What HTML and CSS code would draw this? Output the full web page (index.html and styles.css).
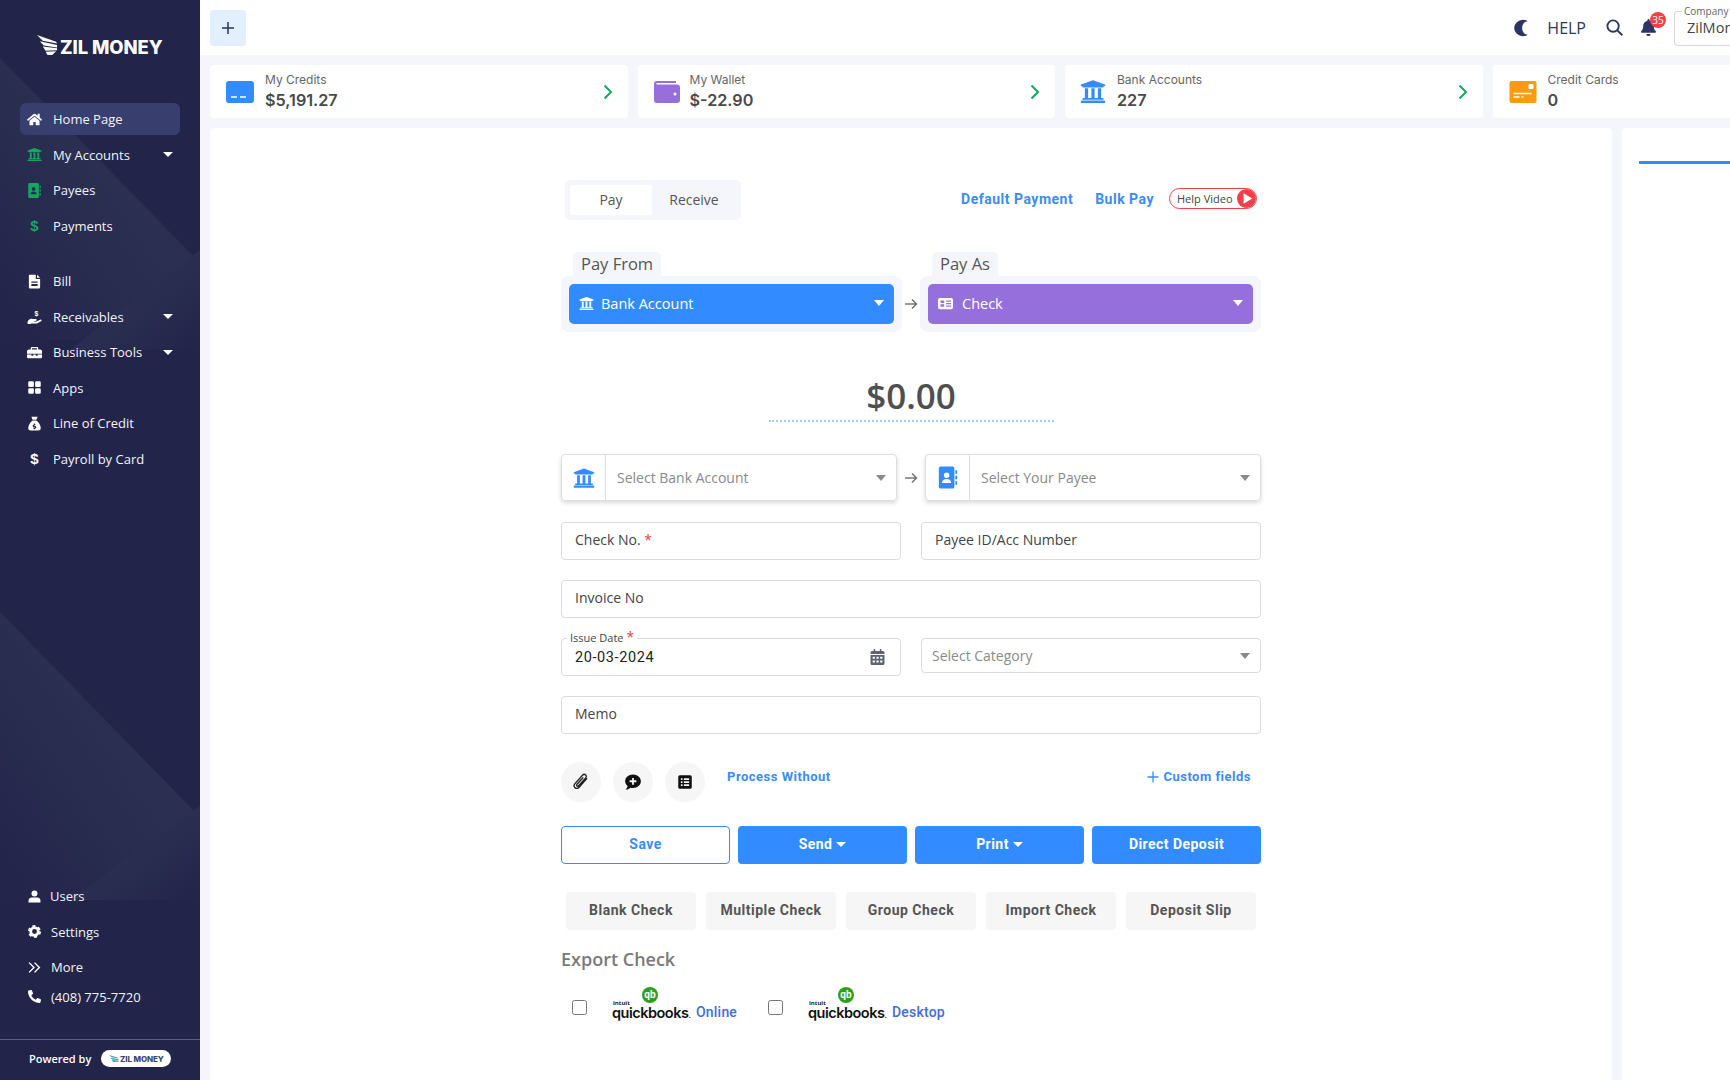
FILE: index.html
```html
<!DOCTYPE html>
<html>

<head>
    <title>Zil Money</title>
    <link rel="stylesheet" href="styles.css">
</head>

<body>
    <svg class="sprite" width="0" height="0">
        <symbol id="i-bank" viewBox="0 0 512 512"><path d="M496 128v16a8 8 0 0 1-8 8h-24v12c0 6.627-5.373 12-12 12H60c-6.627 0-12-5.373-12-12v-12H24a8 8 0 0 1-8-8v-16a8 8 0 0 1 4.941-7.392l232-88a7.996 7.996 0 0 1 6.118 0l232 88A8 8 0 0 1 496 128zm-24 304H40c-13.255 0-24 10.745-24 24v16a8 8 0 0 0 8 8h464a8 8 0 0 0 8-8v-16c0-13.255-10.745-24-24-24zM96 192v192H60c-6.627 0-12 5.373-12 12v20h416v-20c0-6.627-5.373-12-12-12h-36V192h-64v192h-64V192h-64v192h-64V192H96z"/></symbol>
        <symbol id="i-book" viewBox="0 0 24 24"><path d="M4 0h13a2 2 0 0 1 2 2v20a2 2 0 0 1-2 2H4a2 2 0 0 1-2-2V2a2 2 0 0 1 2-2zm6.5 6.5a3 3 0 1 0 0 6 3 3 0 0 0 0-6zM5.500 18h10c0-3-2-4.500-5-4.500s-5 1.500-5 4.500z" fill-rule="evenodd"/><path d="M20 4h2v4h-2zM20 10h2v4h-2zM20 16h2v4h-2z"/></symbol>
        <symbol id="i-caret-arrow" viewBox="0 0 14 12"><path d="M1 6h11M8 1.500 12.500 6 8 10.500" fill="none" stroke="currentColor" stroke-width="1.600"/></symbol>
    </svg>

    <aside class="sidebar">
        <svg class="sidebar-bg" viewBox="0 0 200 1080" preserveAspectRatio="none">
            <defs>
                <linearGradient id="fade-a" x1="1" y1="0" x2="0" y2="1">
                    <stop offset=".45" stop-color="#2b2f52"/>
                    <stop offset="1" stop-color="#222549"/>
                </linearGradient>
                <linearGradient id="fade-b" x1="0" y1="0" x2="1" y2="1">
                    <stop offset=".45" stop-color="#2b2f52"/>
                    <stop offset="1" stop-color="#222549"/>
                </linearGradient>
            </defs>
            <path fill="url(#fade-a)" d="M0 58 195 258 130 340H0z"/>
            <path fill="url(#fade-b)" d="M200 250 70 350H200z"/>
            <path fill="url(#fade-a)" d="M0 612 195 812 130 900H0z"/>
            <path fill="url(#fade-b)" d="M200 806 70 900H200z"/>
        </svg>

        <div class="logo">
            <svg class="logo-wing" viewBox="0 0 22 22"><path fill="#fff" d="M0 0 20 7 21 9 6 6zM3 6.500 21 10.500V13L7 11zM6 12l15 2v2L9 16.500zM9 17.500 20 17 16 21 11 21z"/></svg>
            <span>ZIL MONEY</span>
        </div>

        <nav class="nav">
            <a class="nav-item active">
                <svg class="nav-ic" viewBox="0 0 576 512"><path fill="#fff" d="M280.37 148.26L96 300.11V464a16 16 0 0 0 16 16l112.06-.29a16 16 0 0 0 15.92-16V368a16 16 0 0 1 16-16h64a16 16 0 0 1 16 16v95.64a16 16 0 0 0 16 16.05L464 480a16 16 0 0 0 16-16V300L295.67 148.26a12.19 12.19 0 0 0-15.3 0zM571.6 251.47L488 182.56V44.05a12 12 0 0 0-12-12h-56a12 12 0 0 0-12 12v72.61L318.47 43a48 48 0 0 0-61 0L4.34 251.47a12 12 0 0 0-1.6 16.9l25.5 31A12 12 0 0 0 45.15 301l235.22-193.74a12.19 12.19 0 0 1 15.3 0L530.9 301a12 12 0 0 0 16.9-1.6l25.5-31a12 12 0 0 0-1.7-16.93z"/></svg>
                Home Page
            </a>
            <a class="nav-item"><svg class="nav-ic green"><use href="#i-bank"/></svg>My Accounts<i class="caret"></i></a>
            <a class="nav-item"><svg class="nav-ic green"><use href="#i-book"/></svg>Payees</a>
            <a class="nav-item"><span class="nav-ic dollar green-text">$</span>Payments</a>

            <a class="nav-item gap-top">
                <svg class="nav-ic" viewBox="0 0 24 24"><path fill="#fff" fill-rule="evenodd" d="M4 1h10v7h7v13a2 2 0 0 1-2 2H5a2 2 0 0 1-2-2V2a1 1 0 0 1 1-1zm3 11v2h10v-2zm0 4v3h10v-3zM16 1l5 5h-5z"/></svg>
                Bill
            </a>
            <a class="nav-item">
                <svg class="nav-ic" viewBox="0 0 24 24"><path fill="#fff" d="M1 20c2-4 5-5 8-4h5c2 0 2 3 0 3h-3v1h4l6-3c2-1 3 1 2 2l-7 4H7l-2 1H1z"/><text x="12" y="11" class="hand-dollar">$</text></svg>
                Receivables<i class="caret"></i>
            </a>
            <a class="nav-item">
                <svg class="nav-ic" viewBox="0 0 24 24"><path fill="#fff" fill-rule="evenodd" d="M8 3h8a2 2 0 0 1 2 2v2h3a3 3 0 0 1 3 3v4H0v-4a3 3 0 0 1 3-3h3V5a2 2 0 0 1 2-2zm0 2v2h8V5zM0 15h7v2h3v-2h4v2h3v-2h7v4a2 2 0 0 1-2 2H2a2 2 0 0 1-2-2z"/></svg>
                Business Tools<i class="caret"></i>
            </a>
            <a class="nav-item">
                <svg class="nav-ic" viewBox="0 0 24 24"><path fill="#fff" d="M4 2h5a2 2 0 0 1 2 2v5a2 2 0 0 1-2 2H4a2 2 0 0 1-2-2V4a2 2 0 0 1 2-2zM15 2h5a2 2 0 0 1 2 2v5a2 2 0 0 1-2 2h-5a2 2 0 0 1-2-2V4a2 2 0 0 1 2-2zM4 13h5a2 2 0 0 1 2 2v5a2 2 0 0 1-2 2H4a2 2 0 0 1-2-2v-5a2 2 0 0 1 2-2zM15 13h5a2 2 0 0 1 2 2v5a2 2 0 0 1-2 2h-5a2 2 0 0 1-2-2v-5a2 2 0 0 1 2-2z"/></svg>
                Apps
            </a>
            <a class="nav-item">
                <svg class="nav-ic" viewBox="0 0 24 24"><path fill="#fff" fill-rule="evenodd" d="M7 1h10l-2 5H9zM9 7h6c4 3 7 8 7 12 0 3-2 4-4 4H6c-2 0-4-1-4-4 0-4 3-9 7-12zm2 5v1.500c-3 1-2 4 .5 4.500 2 .3 1.500 1.500-1.500.8v1.400h1v1h2v-1.200c3-1 2-4-.5-4.500-1.800-.3-1.500-1.400 1-.8v-1.300l-1-.3V12z"/></svg>
                Line of Credit
            </a>
            <a class="nav-item"><span class="nav-ic dollar">$</span>Payroll by Card</a>
        </nav>

        <div class="side-bottom">
            <a class="bottom-item users">
                <svg class="bottom-ic" viewBox="0 0 24 24"><circle cx="12" cy="6.500" r="5.500" fill="#fff"/><path fill="#fff" d="M1 23v-3c0-4 3-6 6-6h10c3 0 6 2 6 6v3z"/></svg>
                Users
            </a>
            <a class="bottom-item">
                <svg class="bottom-ic" viewBox="0 0 24 24"><circle cx="12" cy="12" r="7" fill="none" stroke="#fff" stroke-width="5"/><circle cx="12" cy="12" r="10" fill="none" stroke="#fff" stroke-width="4" stroke-dasharray="5.500 5"/></svg>
                Settings
            </a>
            <a class="bottom-item">
                <svg class="bottom-ic" viewBox="0 0 24 24"><path fill="none" stroke="#fff" stroke-width="2.600" d="M2 3l9 9-9 9M12 3l9 9-9 9"/></svg>
                More
            </a>
            <a class="bottom-item phone">
                <svg class="bottom-ic" viewBox="0 0 512 512"><path fill="#fff" transform="matrix(-1 0 0 1 512 0)" d="M493.4 24.6l-104-24c-11.3-2.6-22.9 3.3-27.5 13.9l-48 112c-4.2 9.8-1.4 21.3 6.9 28l60.6 49.6c-36 76.7-98.9 140.5-177.2 177.2l-49.6-60.6c-6.8-8.3-18.2-11.1-28-6.9l-112 48C3.9 366.5-2 378.1.6 389.4l24 104C27.1 504.2 36.7 512 48 512c256.1 0 464-207.5 464-464 0-11.2-7.7-20.9-18.6-23.4z"/></svg>
                (408) 775-7720
            </a>
        </div>

        <div class="powered">
            <span>Powered by</span>
            <span class="powered-pill">
                <svg class="pill-wing" viewBox="0 0 22 22"><path fill="#2aa3b8" d="M0 2 20 8 21 10 6 7zM3 8 21 11.500V14L7 12zM6 13l15 2v2L9 17.500z"/></svg>
                ZIL MONEY
            </span>
        </div>
    </aside>

    <div class="content">
        <header class="topbar">
            <button class="add-btn">
                <svg viewBox="0 0 14 14"><path d="M7 1v12M1 7h12" stroke="#2c3260" stroke-width="1.500"/></svg>
            </button>
            <div class="top-actions">
                <svg class="top-moon" viewBox="0 0 24 24"><path fill="#2e3566" d="M15 1C8.500 1 3 6 3 12s5.500 11 12 11c2.500 0 4.500-.8 6-2-4.500-.2-7.500-4-7.500-9S16.500 3.200 21 3c-1.500-1.200-3.500-2-6-2z"/></svg>
                <span class="top-help">HELP</span>
                <svg class="top-search" viewBox="0 0 24 24"><circle cx="10" cy="10" r="8" fill="none" stroke="#2e3566" stroke-width="2.600"/><path d="M16 16l7 7" stroke="#2e3566" stroke-width="2.800"/></svg>
                <span class="top-bell">
                    <svg viewBox="0 0 448 512"><path fill="#2e3566" d="M224 512c35.32 0 63.97-28.65 63.97-64H160.03c0 35.35 28.65 64 63.97 64zm215.39-149.71c-19.32-20.76-55.47-51.99-55.47-154.29 0-77.7-54.48-139.9-127.94-155.16V32c0-17.67-14.32-32-31.98-32s-31.98 14.33-31.98 32v20.84C118.56 68.1 64.08 130.3 64.08 208c0 102.3-36.15 133.53-55.47 154.29-6 6.45-8.66 14.16-8.61 21.71.11 16.4 12.98 32 32.1 32h383.8c19.12 0 32-15.6 32.1-32 .05-7.55-2.61-15.26-8.61-21.71z"/></svg>
                    <b class="badge">35</b>
                </span>
                <div class="company">
                    <span class="company-label">Company</span>
                    <span class="company-name">ZilMoney</span>
                </div>
            </div>
        </header>

        <section class="stats">
            <div class="stat">
                <svg class="stat-ic" viewBox="0 0 28 22"><rect width="28" height="22" rx="3" fill="#328cff"/><path d="M5 16h6M14 16h6" stroke="#fff" stroke-width="1.500"/></svg>
                <div class="stat-text"><span class="stat-label">My Credits</span><strong class="stat-value">$5,191.27</strong></div>
                <svg class="chev" viewBox="0 0 10 16"><path d="M1.500 1.500 8 8l-6.500 6.500" fill="none" stroke="#12a860" stroke-width="2"/></svg>
            </div>
            <div class="stat">
                <svg class="stat-ic wallet-ic" viewBox="0 0 26 22"><path fill="#9570dd" d="M3 0h19v2H3C2 2 2 3.500 3 3.500h20a3 3 0 0 1 3 3V19a3 3 0 0 1-3 3H3a3 3 0 0 1-3-3V3a3 3 0 0 1 3-3z"/><circle cx="21" cy="13" r="1.500" fill="#fff"/></svg>
                <div class="stat-text"><span class="stat-label">My Wallet</span><strong class="stat-value">$-22.90</strong></div>
                <svg class="chev" viewBox="0 0 10 16"><path d="M1.500 1.500 8 8l-6.500 6.500" fill="none" stroke="#12a860" stroke-width="2"/></svg>
            </div>
            <div class="stat">
                <svg class="stat-ic bank-ic"><use href="#i-bank"/></svg>
                <div class="stat-text"><span class="stat-label">Bank Accounts</span><strong class="stat-value">227</strong></div>
                <svg class="chev" viewBox="0 0 10 16"><path d="M1.500 1.500 8 8l-6.500 6.500" fill="none" stroke="#12a860" stroke-width="2"/></svg>
            </div>
            <div class="stat">
                <svg class="stat-ic" viewBox="0 0 27 22"><rect width="27" height="22" rx="2" fill="#fb9b0f"/><rect x="19" y="3" width="5" height="5" rx="1" fill="#fff"/><path d="M4 12.500h18M4 16h6M12 16h2" stroke="#fff" stroke-width="1.300"/></svg>
                <div class="stat-text"><span class="stat-label">Credit Cards</span><strong class="stat-value">0</strong></div>
            </div>
        </section>

        <main class="panels">
            <section class="form-panel">
                <div class="form-wrap">
                    <div class="form-top">
                        <div class="toggle">
                            <span class="toggle-tab on">Pay</span>
                            <span class="toggle-tab">Receive</span>
                        </div>
                        <div class="top-links">
                            <a class="link-strong">Default Payment</a>
                            <a class="link-strong">Bulk Pay</a>
                            <span class="help-pill">Help Video
                                <svg viewBox="0 0 20 20"><circle cx="10" cy="10" r="10" fill="#f0414a"/><path fill="#fff" d="M7 4.500v11l9-5.500z"/></svg>
                            </span>
                        </div>
                    </div>

                    <div class="pay-row">
                        <div class="pay-col">
                            <span class="pay-tag">Pay From</span>
                            <div class="pay-box">
                                <div class="pay-btn blue">
                                    <svg class="pay-ic"><use href="#i-bank"/></svg>
                                    Bank Account<i class="caret"></i>
                                </div>
                            </div>
                        </div>
                        <svg class="arrow"><use href="#i-caret-arrow"/></svg>
                        <div class="pay-col">
                            <span class="pay-tag">Pay As</span>
                            <div class="pay-box">
                                <div class="pay-btn purple">
                                    <svg class="pay-ic" viewBox="0 0 24 20"><path fill="#fff" fill-rule="evenodd" d="M3 1h18a3 3 0 0 1 3 3v12a3 3 0 0 1-3 3H3a3 3 0 0 1-3-3V4a3 3 0 0 1 3-3zm1 4v4h6V5zm9 0v2h8V5zm0 4v2h8V9zM4 11v4h6v-4zm9 2v2h8v-2z"/></svg>
                                    <span class="check-text">Check</span><i class="caret"></i>
                                </div>
                            </div>
                        </div>
                    </div>

                    <div class="amount">$0.00</div>

                    <div class="select-row">
                        <div class="pick">
                            <span class="pick-ic"><svg class="pick-bank"><use href="#i-bank"/></svg></span>
                            <span class="pick-text">Select Bank Account</span>
                            <i class="caret gray"></i>
                        </div>
                        <svg class="arrow"><use href="#i-caret-arrow"/></svg>
                        <div class="pick">
                            <span class="pick-ic"><svg class="pick-book"><use href="#i-book"/></svg></span>
                            <span class="pick-text">Select Your Payee</span>
                            <i class="caret gray"></i>
                        </div>
                    </div>

                    <div class="fields">
                        <div class="field">Check No.&nbsp;<em class="req">*</em></div>
                        <div class="field">Payee ID/Acc Number</div>
                        <div class="field wide">Invoice No</div>
                        <div class="field date">
                            <span class="float-label">Issue Date <em class="req">*</em></span>
                            <span class="date-val">20-03-2024</span>
                            <svg class="cal" viewBox="0 0 448 512"><path fill="#5e6470" fill-rule="evenodd" d="M100 0h50v60h148V0h50v60h52a48 48 0 0 1 48 48v52H0v-52a48 48 0 0 1 48-48h52zM0 190h448v274a48 48 0 0 1-48 48H48a48 48 0 0 1-48-48zm70 60v60h70v-60zm120 0v60h70v-60zm120 0v60h70v-60zM70 370v60h70v-60zm120 0v60h70v-60zm120 0v60h70v-60z"/></svg>
                        </div>
                        <div class="field category">
                            <span class="pick-text">Select Category</span>
                            <i class="caret gray"></i>
                        </div>
                        <div class="field wide">Memo</div>
                    </div>

                    <div class="tools">
                        <span class="tool">
                            <svg viewBox="0 0 24 24"><path fill="none" stroke="#222" stroke-width="1.800" d="M20 7 9.500 19c-1.500 1.700-4 2-5.500.6s-1.500-3.800 0-5.500L14 3c1.200-1.300 3-1.500 4.200-.4s1 3-.2 4.300L8.800 17c-.7.800-1.700.9-2.300.4s-.6-1.500.1-2.300L15 6"/></svg>
                        </span>
                        <span class="tool">
                            <svg viewBox="0 0 24 24"><path fill="#111" fill-rule="evenodd" d="M12 2c6 0 10.500 4 10.500 9S18 20 12 20c-1.300 0-2.500-.2-3.600-.5C7 21 4.500 22.500 2 22c1.500-1.200 2.500-3 2.800-4.800C2.800 15.700 1.500 13.500 1.500 11 1.500 6 6 2 12 2zm-1.200 4.500v3.300H7.500v2.400h3.300v3.300h2.400v-3.300h3.300V9.800h-3.300V6.500z"/></svg>
                        </span>
                        <span class="tool">
                            <svg viewBox="0 0 24 24"><path fill="#111" fill-rule="evenodd" d="M5 3h14a2 2 0 0 1 2 2v14a2 2 0 0 1-2 2H5a2 2 0 0 1-2-2V5a2 2 0 0 1 2-2zm1.500 4v2.200h2.200V7zm4 0v2.200h7V7zm-4 4v2.200h2.200V11zm4 0v2.200h7V11zm-4 4v2.200h2.200V15zm4 0v2.200h7V15z"/></svg>
                        </span>
                        <a class="link-small process">Process Without</a>
                        <a class="link-small custom"><svg viewBox="0 0 12 12"><path d="M6 .5v11M.5 6h11" stroke="#3a8cf5" stroke-width="1.300"/></svg>Custom fields</a>
                    </div>

                    <div class="main-btns">
                        <button class="btn outline">Save</button>
                        <button class="btn">Send<i class="caret small"></i></button>
                        <button class="btn">Print<i class="caret small"></i></button>
                        <button class="btn">Direct Deposit</button>
                    </div>

                    <div class="sub-btns">
                        <button class="sub-btn">Blank Check</button>
                        <button class="sub-btn">Multiple Check</button>
                        <button class="sub-btn">Group Check</button>
                        <button class="sub-btn">Import Check</button>
                        <button class="sub-btn">Deposit Slip</button>
                    </div>

                    <h3 class="export-title">Export Check</h3>
                    <div class="export-row">
                        <div class="export-item">
                            <input type="checkbox" class="export-check">
                            <span class="qb">
                                <span class="qb-badge">qb</span>
                                <small class="qb-intuit">intuit</small>
                                <span class="qb-word">quickbooks<span class="qb-dot">.</span></span>
                            </span>
                            <a class="export-link">Online</a>
                        </div>
                        <div class="export-item">
                            <input type="checkbox" class="export-check">
                            <span class="qb">
                                <span class="qb-badge">qb</span>
                                <small class="qb-intuit">intuit</small>
                                <span class="qb-word">quickbooks<span class="qb-dot">.</span></span>
                            </span>
                            <a class="export-link">Desktop</a>
                        </div>
                    </div>
                </div>
            </section>

            <section class="side-panel">
                <div class="side-line"></div>
            </section>
        </main>
    </div>
</body>

</html>
```

FILE: styles.css
```css
* {
    box-sizing: border-box;
}

body {
    font-family: "Open Sans", sans-serif;
    margin: 0;
    display: flex;
    width: 1730px;
    height: 1080px;
    overflow: hidden;
    background: #f4f6fb;
    color: #4f4f4f;
}

.sprite {
    position: absolute;
}

i,
em {
    font-style: normal;
}

a {
    text-decoration: none;
}

button {
    border: none;
    font: inherit;
}

/* carets */
.caret {
    width: 0;
    height: 0;
    border-left: 5.500px solid transparent;
    border-right: 5.500px solid transparent;
    border-top: 6px solid #fff;
    margin-left: auto;
}

.caret.gray {
    border-top-color: #8a8a8a;
}

.caret.small {
    border-left-width: 5px;
    border-right-width: 5px;
    border-top-width: 5px;
    margin-left: 4px;
}

/* sidebar */
.sidebar {
    width: 200px;
    flex-shrink: 0;
    height: 100%;
    background: #222549;
    position: relative;
    display: flex;
    flex-direction: column;
    color: #fff;
    overflow: hidden;
}

.sidebar-bg {
    position: absolute;
    left: 0;
    top: 0;
    width: 200px;
    height: 1080px;
}

.logo,
.nav,
.side-bottom,
.powered {
    position: relative;
}

.logo {
    display: flex;
    align-items: flex-end;
    height: 57px;
    padding-left: 37px;
    font-family: Inter, sans-serif;
    font-weight: 800;
    font-size: 18.500px;
    letter-spacing: -.1px;
}

.logo span {
    line-height: 20px;
    margin-left: 2px;
}

.logo-wing {
    width: 21px;
    height: 23px;
    flex-shrink: 0;
}

.nav {
    margin-top: 46px;
    padding: 0 20px;
    flex: 1;
}

.nav-item {
    display: flex;
    align-items: center;
    height: 35.500px;
    padding: 0 7px;
    font-size: 13px;
    color: #f2f3f8;
    white-space: nowrap;
}

.nav-item .caret {
    border-left-width: 5px;
    border-right-width: 5px;
    border-top-width: 5px;
}

.nav-item.active {
    background: #383f6e;
    border-radius: 6px;
    height: 32px;
    margin-bottom: 2px;
}

.nav-item.gap-top {
    margin-top: 20px;
}

.nav-ic {
    width: 15px;
    height: 15px;
    margin-right: 11px;
    flex-shrink: 0;
    fill: #fff;
}

.nav-ic.green {
    fill: #12a860;
}

.dollar {
    font-weight: 700;
    font-size: 15px;
    line-height: 15px;
    text-align: center;
    font-family: "Liberation Sans", sans-serif;
    color: #fff;
}

.green-text {
    color: #12a860;
}

.hand-dollar {
    fill: #fff;
    font-family: "Liberation Sans", sans-serif;
    font-weight: 700;
    font-size: 11px;
}

.side-bottom {
    padding: 0 0 31px 28px;
}

.bottom-item {
    display: flex;
    align-items: center;
    height: 35.500px;
    font-size: 13px;
    color: #f2f3f8;
}

.bottom-item.phone {
    height: 23px;
}

.bottom-ic {
    width: 13px;
    height: 13px;
    margin-right: 10px;
    flex-shrink: 0;
}

.bottom-item.users .bottom-ic {
    margin-right: 9px;
}

.powered {
    height: 41px;
    border-top: 1px solid #5c5f7c;
    display: flex;
    align-items: center;
    padding: 0 0 3px 29px;
    font-size: 11px;
    font-weight: 600;
    color: #fff;
}

.powered-pill {
    display: flex;
    align-items: center;
    justify-content: center;
    width: 70px;
    height: 17px;
    margin-left: 10px;
    background: #fff;
    border-radius: 9px;
    font-family: Inter, sans-serif;
    font-weight: 800;
    font-size: 8px;
    letter-spacing: -.1px;
    color: #3d4a6b;
}

.pill-wing {
    width: 10px;
    height: 10px;
    margin-right: 1px;
}

/* top */
.content {
    width: 1530px;
    flex-shrink: 0;
    display: flex;
    flex-direction: column;
    height: 100%;
}

.topbar {
    height: 55px;
    background: #fff;
    display: flex;
    align-items: center;
    padding-left: 10px;
    flex-shrink: 0;
}

.add-btn {
    width: 36px;
    height: 36px;
    background: #e1efff;
    border-radius: 4px;
    display: flex;
    align-items: center;
    justify-content: center;
    padding: 0;
}

.add-btn svg {
    width: 14px;
    height: 14px;
}

.top-actions {
    margin-left: auto;
    display: flex;
    align-items: center;
}

.top-moon {
    width: 18px;
    height: 18px;
    margin-right: 17px;
}

.top-help {
    font-size: 16px;
    color: #2e3566;
    margin-right: 20px;
}

.top-search {
    width: 17px;
    height: 17px;
    margin-right: 18px;
}

.top-bell {
    position: relative;
    width: 16px;
    height: 17px;
    margin-right: 17px;
}

.top-bell svg {
    display: block;
    width: 15px;
    height: 17px;
}

.badge {
    position: absolute;
    left: 9px;
    top: -7px;
    width: 16px;
    height: 16px;
    border-radius: 50%;
    background: #f0414a;
    color: #fff;
    font-size: 10px;
    font-weight: 400;
    line-height: 16px;
    text-align: center;
}

.company {
    position: relative;
    width: 56px;
    height: 35px;
    border: 1px solid #d5d7dc;
    border-right: none;
    border-radius: 4px 0 0 4px;
    padding: 6px 0 0 12px;
    margin-top: 1px;
    white-space: nowrap;
}

.company-label {
    position: absolute;
    left: 7px;
    top: -7px;
    padding: 0 2px;
    background: #fff;
    font-size: 10px;
    line-height: 12px;
    color: #666;
}

.company-name {
    font-size: 14.500px;
    line-height: 20px;
    color: #444;
    display: block;
}

/* stat cards */
.stats {
    display: flex;
    gap: 10px;
    padding: 10px 0 0 10px;
    flex-shrink: 0;
}

.stat {
    width: 417.500px;
    height: 53px;
    flex-shrink: 0;
    background: #fff;
    border-radius: 4px;
    display: flex;
    align-items: center;
    padding: 0 15px 0 16px;
    font-family: Inter, sans-serif;
}

.stat-ic {
    width: 28px;
    height: 22px;
    margin-right: 11px;
    flex-shrink: 0;
}

.wallet-ic {
    width: 26px;
    margin-right: 10px;
}

.bank-ic {
    fill: #328cff;
    width: 26px;
    height: 27px;
    margin-left: -1px;
    margin-right: 11px;
}

.stat-text {
    display: flex;
    flex-direction: column;
    flex: 1;
    margin-top: 1px;
}

.stat-label {
    font-size: 12px;
    line-height: 16px;
    color: #666;
}

.stat-value {
    font-size: 16.200px;
    font-weight: 600;
    line-height: 24px;
    color: #4a4a4a;
}

.chev {
    width: 10px;
    height: 16px;
    flex-shrink: 0;
}

/* panels */
.panels {
    display: flex;
    gap: 10px;
    padding: 10px 0 0 10px;
    flex: 1;
}

.form-panel {
    width: 1402px;
    flex-shrink: 0;
    background: #fff;
    border-radius: 4px 4px 0 0;
    padding-top: 52px;
}

.side-panel {
    width: 200px;
    flex-shrink: 0;
    background: #fff;
    padding: 33px 0 0 17px;
    border-radius: 4px 4px 0 0;
}

.side-line {
    height: 3px;
    background: #328cff;
}

.form-wrap {
    width: 700px;
    margin: 0 auto;
}

.form-top {
    display: flex;
    align-items: center;
    justify-content: space-between;
    padding: 0 4px;
}

.toggle {
    display: flex;
    width: 176px;
    height: 40px;
    padding: 5px;
    background: #f4f6fb;
    border-radius: 5px;
}

.toggle-tab {
    width: 82px;
    line-height: 30px;
    text-align: center;
    font-size: 14px;
    color: #555;
}

.toggle-tab + .toggle-tab {
    width: 84px;
}

.toggle-tab.on {
    background: #fff;
    border-radius: 3px;
}

.top-links {
    display: flex;
    align-items: center;
    margin-top: -3px;
}

.link-strong {
    font-family: Roboto, sans-serif;
    font-weight: 700;
    font-size: 14px;
    letter-spacing: .5px;
    color: #3a8cf5;
    margin-right: 22px;
}

.link-strong + .link-strong {
    margin-right: 15px;
}

.help-pill {
    display: flex;
    align-items: center;
    justify-content: space-between;
    width: 88px;
    height: 21px;
    border: 1px solid #f0414a;
    border-radius: 11px;
    padding-left: 7px;
    font-size: 11px;
    color: #444;
    white-space: nowrap;
}

.help-pill svg {
    width: 19px;
    height: 19px;
    flex-shrink: 0;
}

.pay-row {
    display: flex;
    justify-content: space-between;
    align-items: flex-end;
    margin-top: 32px;
}

.pay-row .arrow {
    margin-bottom: 22px;
}

.pay-col {
    width: 341px;
    display: flex;
    flex-direction: column;
    align-items: flex-start;
}

.pay-tag {
    height: 24px;
    margin-left: 12px;
    padding: 0 8px;
    background: #f4f6fb;
    border-radius: 5px 5px 0 0;
    font-size: 16.500px;
    font-weight: 500;
    line-height: 24px;
    color: #555;
}

.pay-box {
    width: 100%;
    height: 56px;
    padding: 8px;
    background: #f4f6fb;
    border-radius: 8px;
}

.pay-btn {
    height: 40px;
    border-radius: 5px;
    display: flex;
    align-items: center;
    padding: 0 10px 2px 10px;
    color: #fff;
    font-size: 14.500px;
    font-weight: 500;
}

.pay-btn.blue {
    background: #328cff;
}

.pay-btn.purple {
    background: #9570dd;
}

.pay-ic {
    width: 15px;
    height: 15px;
    fill: #fff;
    margin-right: 7px;
    flex-shrink: 0;
}

.check-text {
    margin-left: 2px;
}

.arrow {
    width: 14px;
    height: 12px;
    color: #777;
    flex-shrink: 0;
}

.amount {
    width: 285px;
    margin: 44px auto 0;
    height: 46px;
    border-bottom: 2px dotted #a9c8f5;
    text-align: center;
    font-size: 35px;
    font-weight: 600;
    line-height: 40px;
    color: #4f4f4f;
}

.select-row {
    display: flex;
    justify-content: space-between;
    align-items: center;
    margin-top: 32px;
}

.pick {
    width: 336px;
    height: 47px;
    border: 1px solid #dcdee2;
    border-radius: 4px;
    box-shadow: 0 2px 4px rgba(0, 0, 0, .15);
    display: flex;
    align-items: center;
    padding-right: 10px;
}

.pick-ic {
    width: 44px;
    height: 100%;
    border-right: 1px solid #dcdee2;
    display: flex;
    align-items: center;
    justify-content: center;
    flex-shrink: 0;
    margin-right: 11px;
}

.pick-bank {
    width: 22px;
    height: 24px;
    fill: #328cff;
}

.pick-book {
    width: 22px;
    height: 23px;
    fill: #328cff;
}

.pick-text {
    font-size: 14px;
    color: #8a8a8a;
}

.fields {
    display: grid;
    grid-template-columns: 340px 340px;
    justify-content: space-between;
    row-gap: 20px;
    margin-top: 21px;
}

.field {
    height: 38px;
    border: 1px solid #d9dbdf;
    border-radius: 4px;
    display: flex;
    align-items: center;
    padding: 0 0 3px 13px;
    font-size: 14px;
    color: #444;
    position: relative;
}

.field.wide {
    grid-column: span 2;
}

.req {
    color: #ef3b3b;
}

.float-label {
    position: absolute;
    left: 5px;
    top: -8px;
    background: #fff;
    padding: 0 3px;
    font-size: 11px;
    line-height: 13px;
    color: #444;
}

.float-label .req {
    font-size: 14px;
    line-height: 10px;
}

.date-val {
    color: #222;
    font-family: Roboto, sans-serif;
    font-size: 14.500px;
    letter-spacing: .6px;
    margin-top: 3px;
}

.cal {
    width: 15px;
    height: 16px;
    margin: 3px 15px 0 auto;
}

.field.category {
    height: 35px;
    padding: 0 10px;
}

.tools {
    display: flex;
    margin-top: 28px;
    height: 40px;
    gap: 12px;
}

.tool {
    width: 40px;
    height: 40px;
    border-radius: 50%;
    background: #f6f6f6;
    display: flex;
    align-items: center;
    justify-content: center;
}

.tool svg {
    width: 18px;
    height: 18px;
}

.link-small {
    font-family: Roboto, sans-serif;
    font-weight: 700;
    font-size: 13px;
    letter-spacing: .5px;
    color: #3a8cf5;
    line-height: 16px;
    margin-top: 7px;
}

.process {
    margin-left: 10px;
}

.custom {
    margin-left: auto;
    margin-right: 10px;
    display: flex;
    align-items: center;
    align-self: flex-start;
}

.custom svg {
    width: 12px;
    height: 12px;
    margin-right: 4px;
}

.main-btns {
    display: grid;
    grid-template-columns: repeat(4, 1fr);
    gap: 8px;
    margin-top: 24px;
}

.btn {
    height: 38px;
    background: #328cff;
    border-radius: 4px;
    padding: 0 0 2px;
    color: #fff;
    font-family: Roboto, sans-serif;
    font-weight: 700;
    font-size: 14px;
    letter-spacing: .45px;
    display: flex;
    align-items: center;
    justify-content: center;
}

.btn.outline {
    background: #fff;
    border: 1px solid #328cff;
    color: #3a8cf5;
}

.sub-btns {
    display: flex;
    gap: 10px;
    padding: 0 5px;
    margin-top: 28px;
}

.sub-btn {
    width: 130px;
    height: 38px;
    background: #f6f6f6;
    border-radius: 4px;
    padding: 0 0 2px;
    font-family: Roboto, sans-serif;
    font-weight: 700;
    font-size: 14px;
    letter-spacing: .5px;
    color: #555;
}

.export-title {
    margin: 17px 0 0;
    font-size: 18px;
    font-weight: 600;
    line-height: 24px;
    color: #7a7a7a;
}

.export-row {
    display: flex;
    margin-top: 16px;
    padding-left: 11px;
}

.export-item {
    display: flex;
    align-items: flex-end;
    width: 196px;
}

.export-check {
    width: 15px;
    height: 15px;
    margin: 0 25px 8px 0;
    flex-shrink: 0;
}

.qb {
    position: relative;
    display: block;
    width: 84px;
    height: 36px;
    flex-shrink: 0;
}

.qb-badge {
    position: absolute;
    left: 30px;
    top: 0;
    width: 16px;
    height: 16px;
    border-radius: 50%;
    background: #2ca01c;
    color: #fff;
    font-family: Roboto, sans-serif;
    font-size: 10px;
    font-weight: 700;
    line-height: 15px;
    text-align: center;
}

.qb-intuit {
    position: absolute;
    left: 1px;
    top: 13px;
    font-size: 6px;
    font-weight: 700;
    line-height: 6px;
    color: #222;
}

.qb-word {
    position: absolute;
    left: 0;
    top: 19px;
    font-family: Inter, sans-serif;
    font-size: 14.500px;
    font-weight: 600;
    letter-spacing: -.5px;
    line-height: 14px;
    color: #111;
}

.qb-dot {
    font-size: 10px;
    font-weight: 400;
}

.export-link {
    font-family: Roboto, sans-serif;
    font-weight: 500;
    font-size: 14px;
    letter-spacing: .2px;
    line-height: 18px;
    margin-bottom: 2px;
    color: #3f6fd9;
}
```
